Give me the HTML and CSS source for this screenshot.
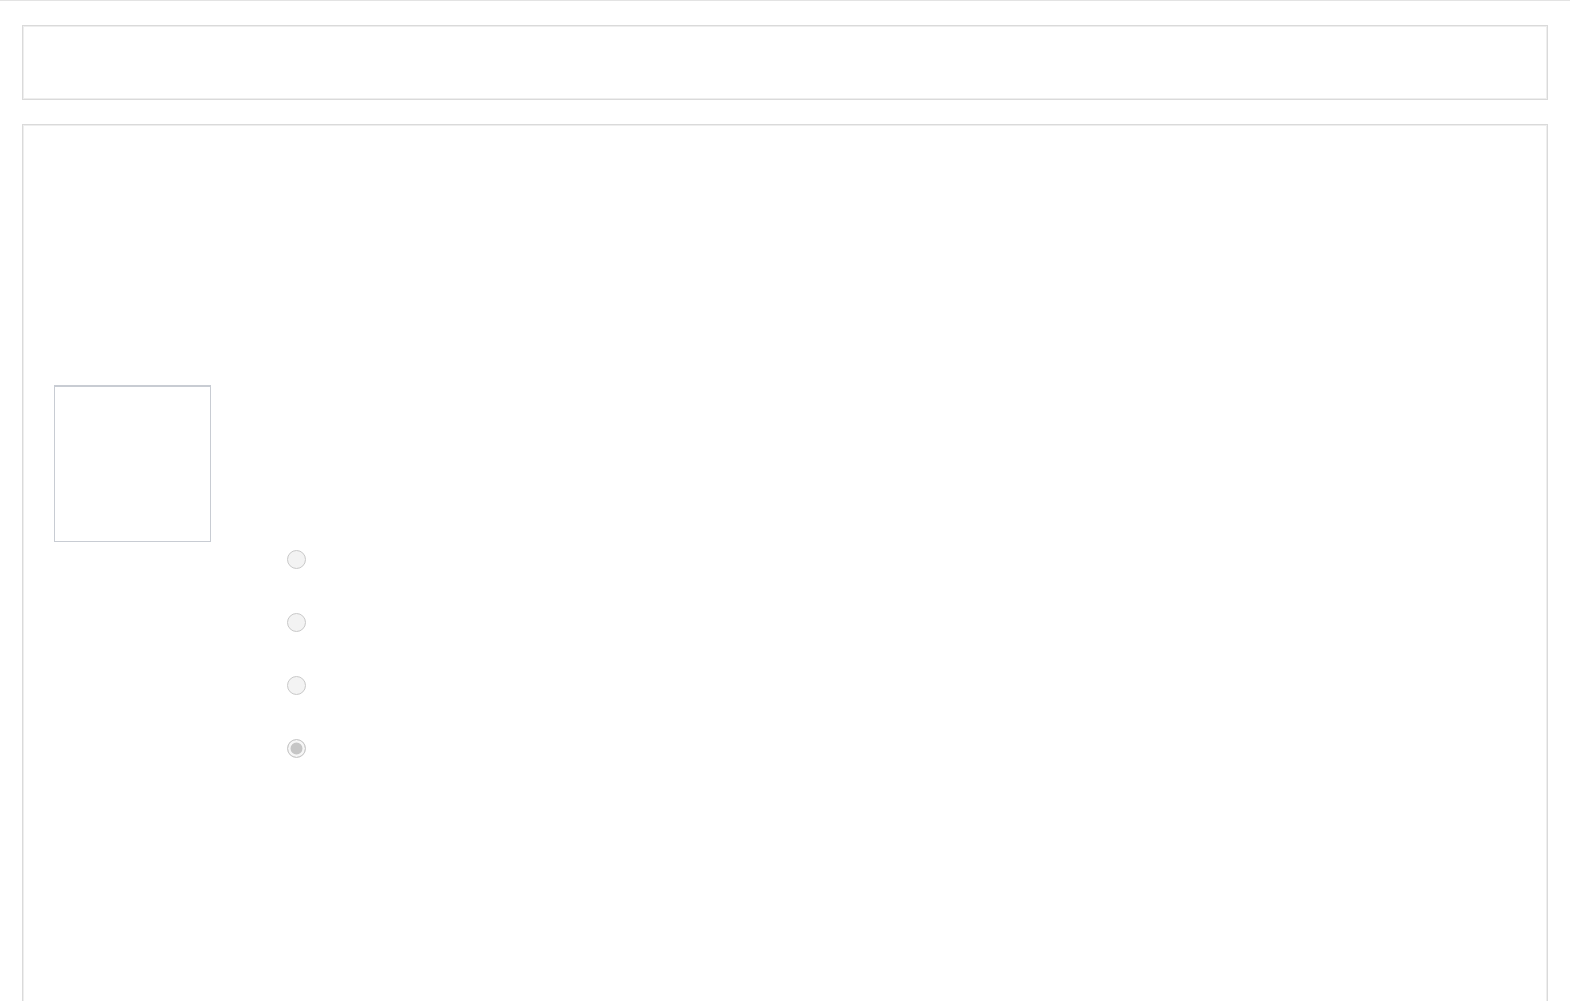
FILE: index.html
```html
<!DOCTYPE html>
<html>
<head>
<meta charset="utf-8">
<link rel="stylesheet" href="styles.css">
</head>
<body>
<div class="topline"></div>
<div class="page">
  <div class="panel header-panel"></div>
  <div class="panel main-panel">
    <div class="thumb"></div>
    <div class="options">
      <label class="opt"><input type="radio" name="o" disabled></label>
      <label class="opt"><input type="radio" name="o" disabled></label>
      <label class="opt"><input type="radio" name="o" disabled></label>
      <label class="opt"><input type="radio" name="o" disabled checked></label>
    </div>
  </div>
</div>
</body>
</html>
```
FILE: styles.css
```css
html, body {
  margin: 0;
  padding: 0;
  background: #ffffff;
  font-family: "Liberation Sans", Arial, sans-serif;
  overflow: hidden;
}
.topline {
  height: 1px;
  background: #e3e3e3;
}
.page {
  padding: 24px 22px 0 22px;
  display: flex;
  flex-direction: column;
  gap: 24px;
}
.panel {
  border: 1px solid #dadada;
  box-shadow: 0 0 0 1px #eeeeee inset;
  background: #fff;
}
.header-panel {
  height: 73px;
}
.main-panel {
  height: 1000px;
  padding: 260px 0 0 31px;
}
.thumb {
  width: 155px;
  height: 154px;
  border: 1px solid #c8ccd3;
  border-top-width: 2px;
}
.options {
  display: flex;
  flex-direction: column;
  gap: 44px;
  padding: 8px 0 0 233px;
}
.opt {
  display: block;
  height: 19px;
}
.opt input {
  appearance: none;
  -webkit-appearance: none;
  margin: 0;
  width: 19px;
  height: 19px;
  border-radius: 50%;
  border: 1.5px solid #c9c9c9;
  background: #f3f3f3;
  box-sizing: border-box;
  display: block;
}
.opt input:checked {
  background: #c6c6c6;
  box-shadow: inset 0 0 0 2.5px #f6f6f6;
}
```
